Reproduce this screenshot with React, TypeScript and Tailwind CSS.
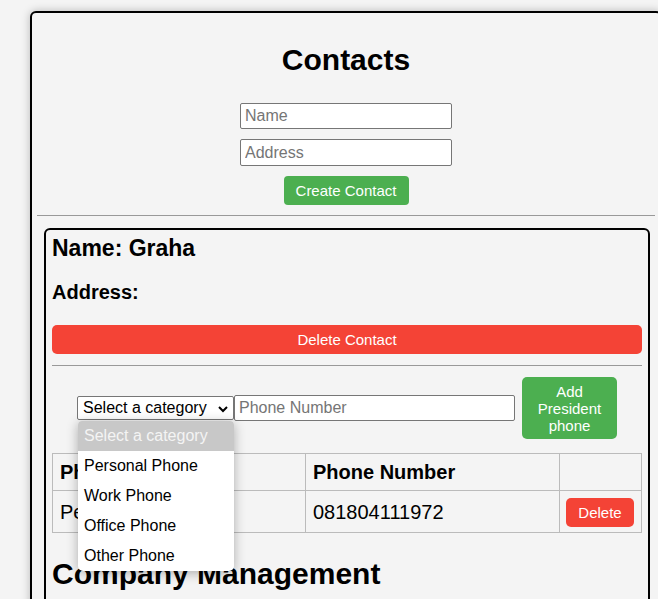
import { useState } from "react";

const CATEGORIES = ["Personal Phone", "Work Phone", "Office Phone", "Other Phone"];

function TextBox({ placeholder, className }: { placeholder: string; className: string }) {
  return (
    <input
      type="text"
      placeholder={placeholder}
      className={`rounded-[2px] border border-[#767676] bg-white px-[4px] text-[16px] text-black placeholder-[#757575] outline-none ${className}`}
    />
  );
}

function CategorySelect() {
  const [open] = useState(true);
  return (
    <div className="relative">
      <div className="flex h-[24px] w-[157px] items-center justify-between rounded-[2px] border border-[#767676] bg-white pl-[5px] pr-[4px] text-[16px] text-black">
        <span>Select a category</span>
        <svg width="12" height="12" viewBox="0 0 12 12" className="mt-[1px]">
          <path d="M2 4 L6 8 L10 4" fill="none" stroke="#000" strokeWidth="2" />
        </svg>
      </div>
      {open && (
        <div className="absolute left-[1px] top-[25px] z-10 w-[156px] overflow-hidden rounded-b-[5px] rounded-t-[4px] bg-white shadow-[0_2px_12px_rgba(0,0,0,0.3)]">
          <div className="flex h-[30px] items-center bg-[#c8c8c8] pl-[6px] text-[16px] text-[#f4f4f4]">
            Select a category
          </div>
          {CATEGORIES.map((c) => (
            <div key={c} className="flex h-[30px] items-center pl-[6px] text-[16px] text-black">
              {c}
            </div>
          ))}
        </div>
      )}
    </div>
  );
}

function ContactCard() {
  return (
    <div className="ml-[7px] mr-[5px] mt-[12px] rounded-[6px] border-2 border-black px-[6px] pt-[5px] pb-[40px]">
      <h2 className="text-[23px] font-bold leading-[27px]">Name: Graha</h2>
      <h3 className="mt-[19px] text-[20px] font-bold leading-[23px]">Address:</h3>
      <button
        type="button"
        className="mt-[21px] h-[29px] w-full rounded-[5px] bg-[#f44336] pt-[2px] text-[15px] text-white"
      >
        Delete Contact
      </button>
      <div className="mt-[11px] border-t border-[#999]" />

      <div className="mt-[11px] flex items-center justify-center">
        <CategorySelect />
        <TextBox placeholder="Phone Number" className="h-[26px] w-[281px]" />
        <button
          type="button"
          className="ml-[7px] h-[62px] w-[95px] rounded-[5px] bg-[#4caf50] px-[8px] text-[15px] leading-[17px] text-white"
        >
          Add President phone
        </button>
      </div>

      <table className="mt-[14px] w-full border-collapse text-[20px]">
        <thead>
          <tr className="h-[37px]">
            <th className="w-[253px] border border-[#bbb] px-[7px] text-left font-bold">Phone Type</th>
            <th className="w-[254px] border border-[#bbb] px-[7px] text-left font-bold">Phone Number</th>
            <th className="border border-[#bbb] px-[7px]" />
          </tr>
        </thead>
        <tbody>
          <tr className="h-[42px]">
            <td className="border border-[#bbb] px-[7px]">Personal Phone</td>
            <td className="border border-[#bbb] px-[7px]">081804111972</td>
            <td className="border border-[#bbb] px-[6px]">
              <button
                type="button"
                className="h-[29px] w-[68px] rounded-[5px] bg-[#f44336] pt-[1px] text-[15px] text-white"
              >
                Delete
              </button>
            </td>
          </tr>
        </tbody>
      </table>

      <h1 className="mt-[24px] text-[30px] font-bold leading-[34px]">Company Management</h1>
    </div>
  );
}

export default function App() {
  return (
    <div className="h-[599px] w-[658px] overflow-hidden bg-[#f4f4f4] pt-[11px] font-['Liberation_Sans',Arial,sans-serif] text-black">
      <div className="ml-[30px] w-[632px] rounded-[6px] border-2 border-black bg-[#f4f4f4] px-[5px] shadow-[0_0_8px_rgba(0,0,0,0.25)]">
        <h1 className="mt-[30px] text-center text-[30px] font-bold leading-[34px]">Contacts</h1>
        <div className="mt-[26px] flex flex-col items-center">
          <TextBox placeholder="Name" className="h-[26px] w-[212px]" />
          <TextBox placeholder="Address" className="mt-[10px] h-[27px] w-[212px]" />
          <button
            type="button"
            className="mt-[10px] h-[29px] w-[125px] rounded-[4px] bg-[#4caf50] pt-[1px] text-[15px] text-white"
          >
            Create Contact
          </button>
        </div>
        <div className="mt-[10px] border-t border-[#999]" />
        <ContactCard />
      </div>
    </div>
  );
}
